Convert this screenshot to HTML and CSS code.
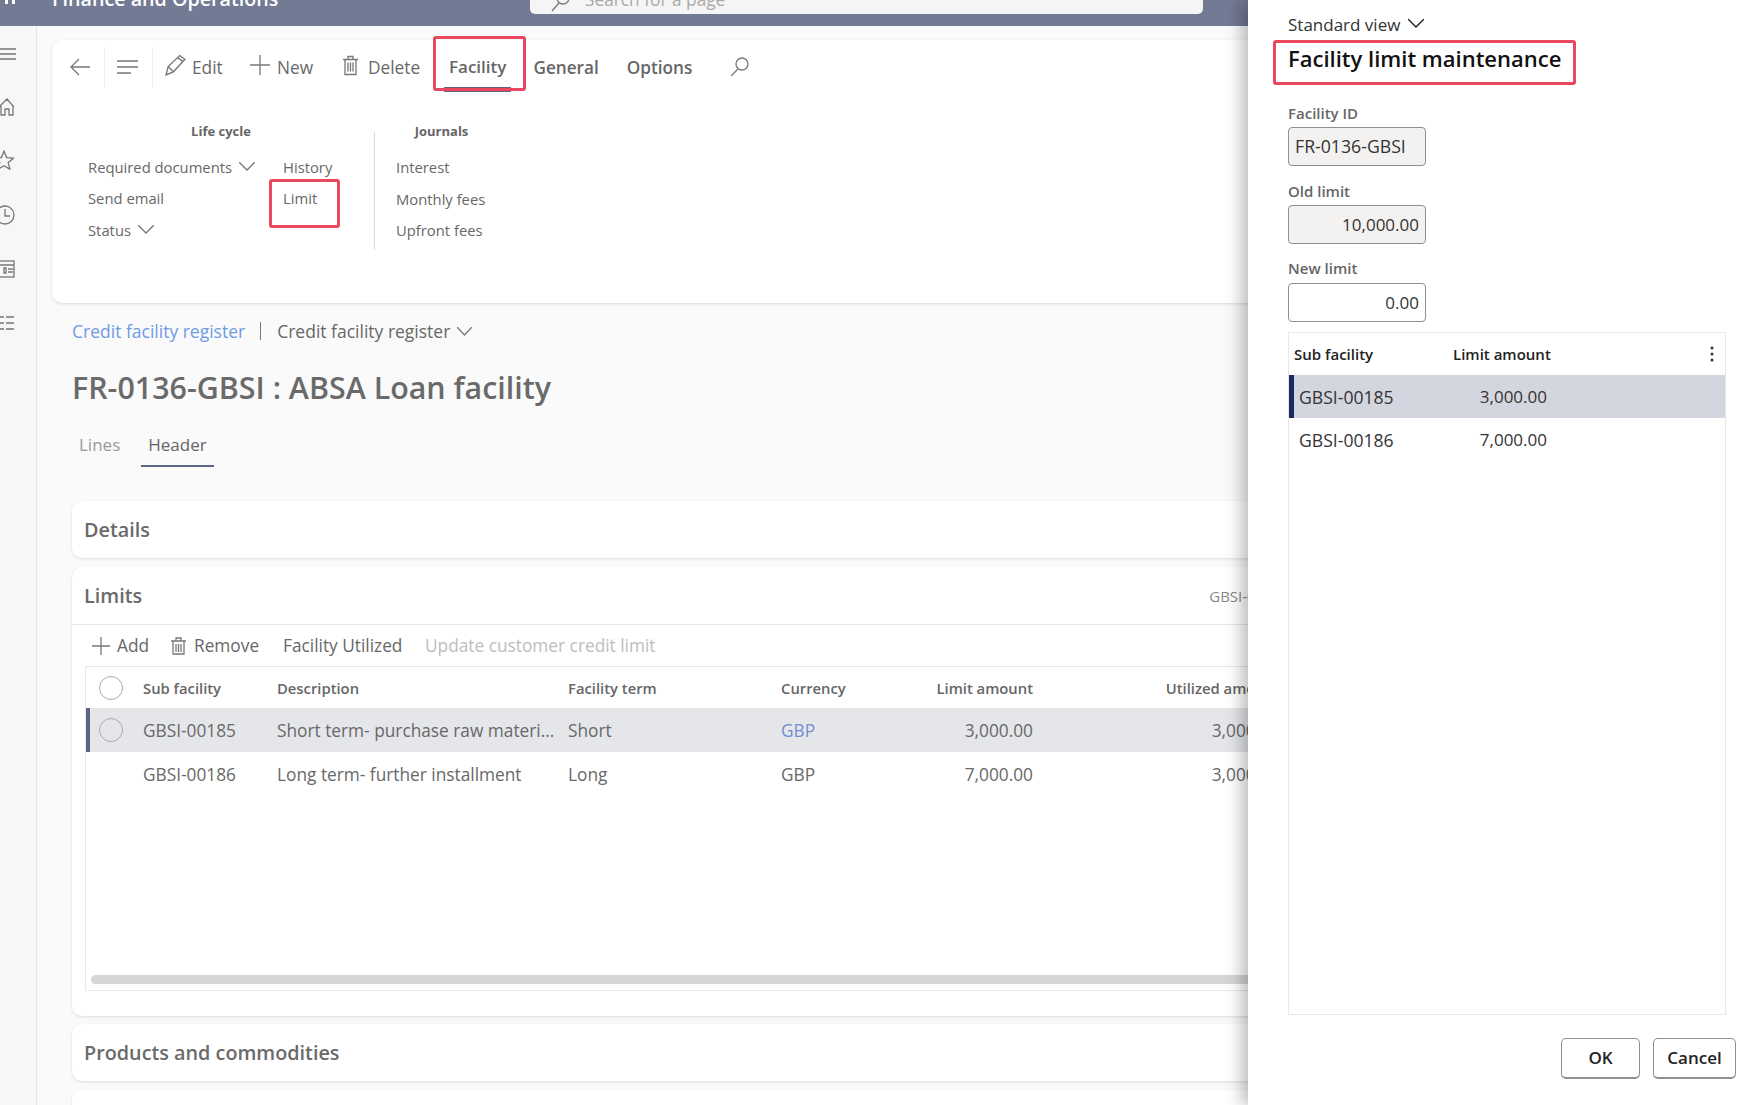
FILE: index.html
```html
<!DOCTYPE html>
<html>
    <head>
        <title>Facility limit maintenance</title>
        <link rel="stylesheet" href="styles.css">
    </head>
    <body>
        <div class="topbar">
            <svg class="waffle" width="12" height="4" viewBox="0 0 12 4"><rect x="0" y="0" width="3" height="4" fill="#fff"/><rect x="7" y="0" width="3" height="4" fill="#fff"/></svg>
            <div class="app_name">Finance and Operations</div>
            <div class="searchbox">
                <svg width="22" height="22" viewBox="0 0 22 22" class="ico"><circle cx="13" cy="8" r="6"/><path d="M9 13L2 21"/></svg>
                <span>Search for a page</span>
            </div>
        </div>

        <div class="shell">
            <div class="rail">
                <svg width="16" height="12" viewBox="0 0 16 12" class="ico"><path d="M0 1H16M0 6H16M0 11H16"/></svg>
                <svg width="14" height="18" viewBox="6 0 14 18" class="ico"><path d="M5 9L13 1L20 9M7 8V17H11V11H15V17H19V8"/></svg>
                <svg width="14" height="20" viewBox="7 0 14 20" class="ico"><path d="M11 1L13.6 7.6L20.5 8.2L15.2 12.6L16.9 19.3L11 15.7L5 19.3L6.8 12.6L1.5 8.2L8.4 7.6Z"/></svg>
                <svg width="15" height="20" viewBox="5 0 15 20" class="ico"><circle cx="10" cy="10" r="9"/><path d="M10 4V11H15"/></svg>
                <svg width="15" height="18" viewBox="5 0 15 18" class="ico"><rect x="1" y="1" width="18" height="16"/><path d="M1 5H19M9 8H11V13H9ZM13 9H18M13 12H18"/></svg>
                <svg width="14" height="15" viewBox="0 0 14 15" class="ico"><path d="M0 1H4M6 1H14M0 7H4M6 7H14M0 13H4M6 13H14"/></svg>
            </div>

            <div class="content">
                <div class="actionpane">
                    <div class="actionbar">
                        <span class="action_back"><svg width="20" height="20" viewBox="0 0 20 20" class="ico"><path d="M20 10H1M9 2L1 10L9 18"/></svg></span>
                        <span class="action_sep"></span>
                        <span class="action_lines"><svg width="21" height="14" viewBox="0 0 21 14" class="ico"><path d="M0 1H21M0 7H21M0 13H14"/></svg></span>
                        <span class="action_sep"></span>
                        <span class="action action_edit"><svg width="21" height="22" viewBox="0 0 20 21" class="ico"><path d="M1 20L3 12L14 1.5L19 5L8 17ZM3 12L8 17M12 3.5L17 7"/></svg>Edit</span>
                        <span class="action action_new"><svg width="20" height="20" viewBox="0 0 20 20" class="ico"><path d="M10 0V20M0 10H20"/></svg>New</span>
                        <span class="action action_delete"><svg width="15" height="21" viewBox="0 0 15 20" class="ico"><path d="M2 4V19H13V4M0 4H15M5 4V1H10V4M5 7V16M7.5 7V16M10 7V16"/></svg>Delete</span>
                        <span class="tab_facility marked">Facility</span>
                        <span class="action_tab action_general">General</span>
                        <span class="action_tab action_options">Options</span>
                        <svg width="19" height="19" viewBox="0 0 19 19" class="ico action_search"><circle cx="12" cy="7" r="6"/><path d="M8 12L1 19"/></svg>
                    </div>
                    <div class="groups">
                        <div class="group_life">
                            <div class="group_title">Life cycle</div>
                            <div class="group_links">
                                <div>Required documents<svg width="16" height="9" viewBox="0 0 16 9" class="ico chev"><path d="M0 0L8 8L16 0"/></svg></div>
                                <div>History</div>
                                <div>Send email</div>
                                <div class="marked marked_limit">Limit</div>
                                <div>Status<svg width="16" height="9" viewBox="0 0 16 9" class="ico chev"><path d="M0 0L8 8L16 0"/></svg></div>
                            </div>
                        </div>
                        <div class="group_sep"></div>
                        <div class="group_journals">
                            <div class="group_title">Journals</div>
                            <div>Interest</div>
                            <div>Monthly fees</div>
                            <div>Upfront fees</div>
                        </div>
                    </div>
                </div>

                <div class="page">
                    <div class="breadcrumb">
                        <span class="crumb_link">Credit facility register</span>
                        <span class="crumb_sep"></span>
                        <span>Credit facility register</span>
                        <svg width="15" height="9" viewBox="0 0 15 9" class="ico chev"><path d="M0 0L7.500 8L15 0"/></svg>
                    </div>
                    <div class="page_title">FR-0136-GBSI : ABSA Loan facility</div>
                    <div class="tabs">
                        <span class="tab">Lines</span>
                        <span class="tab tab_on">Header</span>
                    </div>

                    <div class="card card_short">Details</div>

                    <div class="card card_limits">
                        <div class="limits_head">
                            <span>Limits</span>
                            <span class="limits_ref">GBSI-00185</span>
                        </div>
                        <div class="toolbar">
                            <span class="tool tool_add"><svg width="18" height="18" viewBox="0 0 18 18" class="ico"><path d="M9 0V18M0 9H18"/></svg>Add</span>
                            <span class="tool tool_remove"><svg width="15" height="18" viewBox="0 0 15 18" class="ico"><path d="M2 4V17H13V4M0 4H15M5 4V1H10V4M5 7V15M7.500 7V15M10 7V15"/></svg>Remove</span>
                            <span class="tool tool_util">Facility Utilized</span>
                            <span class="tool tool_off">Update customer credit limit</span>
                        </div>
                        <div class="grid">
                            <div class="grid_row grid_head">
                                <span class="c_sel"><i class="radio"></i></span>
                                <span class="c_sub">Sub facility</span>
                                <span class="c_desc">Description</span>
                                <span class="c_term">Facility term</span>
                                <span class="c_cur">Currency</span>
                                <span class="c_amt">Limit amount</span>
                                <span class="c_used">Utilized amount</span>
                            </div>
                            <div class="grid_row grid_sel">
                                <span class="c_sel"><i class="radio"></i></span>
                                <span class="c_sub">GBSI-00185</span>
                                <span class="c_desc">Short term- purchase raw materi...</span>
                                <span class="c_term">Short</span>
                                <span class="c_cur cur_link">GBP</span>
                                <span class="c_amt">3,000.00</span>
                                <span class="c_used">3,000.00</span>
                            </div>
                            <div class="grid_row">
                                <span class="c_sel"></span>
                                <span class="c_sub">GBSI-00186</span>
                                <span class="c_desc">Long term- further installment</span>
                                <span class="c_term">Long</span>
                                <span class="c_cur">GBP</span>
                                <span class="c_amt">7,000.00</span>
                                <span class="c_used">3,000.00</span>
                            </div>
                            <div class="grid_fill"></div>
                            <div class="scrollbar"></div>
                        </div>
                    </div>

                    <div class="card card_short">Products and commodities</div>
                    <div class="card card_last"></div>
                </div>
            </div>
        </div>

        <div class="panel">
            <div class="view_name">Standard view<svg width="16" height="9" viewBox="0 0 16 9" class="ico_dark"><path d="M0 0L8 8L16 0"/></svg></div>
            <div class="panel_title"><span class="marked marked_title">Facility limit maintenance</span></div>

            <label class="field_label field_first">Facility ID</label>
            <div class="field field_ro field_id">FR-0136-GBSI</div>
            <label class="field_label">Old limit</label>
            <div class="field field_ro field_num">10,000.00</div>
            <label class="field_label field_last">New limit</label>
            <div class="field field_num field_new">0.00</div>

            <div class="panel_grid">
                <div class="pg_head">
                    <span class="pg_sub">Sub facility</span>
                    <span>Limit amount</span>
                    <svg class="pg_more" width="4" height="16" viewBox="0 0 4 16"><circle cx="2" cy="2" r="1.500"/><circle cx="2" cy="8" r="1.500"/><circle cx="2" cy="14" r="1.500"/></svg>
                </div>
                <div class="pg_row pg_sel"><span class="pg_id">GBSI-00185</span><span class="pg_amt">3,000.00</span></div>
                <div class="pg_row"><span class="pg_id">GBSI-00186</span><span class="pg_amt">7,000.00</span></div>
            </div>

            <div class="panel_foot">
                <button class="btn btn_ok">OK</button>
                <button class="btn btn_cancel">Cancel</button>
            </div>
        </div>
    </body>
</html>
```

FILE: styles.css
```css
html, body {
    margin: 0;
    padding: 0;
    height: 100%;
    overflow: hidden;
}

body {
    position: relative;
    width: 1737px;
    height: 1105px;
    background: #fafafa;
    font-family: "Open Sans", "Noto Sans", sans-serif;
    font-size: 17.300px;
    color: #686868;
}

.ico {
    fill: none;
    stroke: #777;
    stroke-width: 1.3;
    flex: none;
}

.ico_dark {
    fill: none;
    stroke: #222;
    stroke-width: 1.4;
    margin-left: 8px;
}

.chev {
    margin-left: 7px;
    vertical-align: 2px;
}

/* top bar, cut by the top of the picture */
.topbar {
    display: flex;
    align-items: flex-end;
    height: 26px;
    overflow: hidden;
    background: #737a94;
}

.waffle {
    margin: 0 0 22px 5px;
}

.app_name {
    margin: 0 0 16px 35px;
    width: 478px;
    line-height: 22px;
    font-size: 19.700px;
    font-weight: 600;
    color: #fff;
    white-space: nowrap;
}

.searchbox {
    align-self: flex-start;
    display: flex;
    align-items: flex-end;
    gap: 13px;
    width: 653px;
    height: 14px;
    padding-left: 20px;
    overflow: hidden;
    background: #f5f5f5;
    border-radius: 0 0 5px 5px;
    color: #aaa;
}

.searchbox svg {
    margin-bottom: 2px;
}

.searchbox span {
    line-height: 20px;
    margin-bottom: 4px;
}

.shell {
    display: flex;
    height: 1079px;
}

.rail {
    flex: none;
    display: flex;
    flex-direction: column;
    align-items: flex-start;
    width: 37px;
    padding-top: 22px;
    box-sizing: border-box;
    background: #f7f7f7;
    border-right: 1px solid #e6e6e6;
}

.rail svg:nth-child(1) { margin-bottom: 38px; }
.rail svg:nth-child(2) { margin-bottom: 34px; }
.rail svg:nth-child(3) { margin-bottom: 35px; }
.rail svg:nth-child(4) { margin-bottom: 35px; }
.rail svg:nth-child(5) { margin-bottom: 38px; }

.content {
    flex: 1;
    padding: 14px 0 0 15px;
    min-width: 0;
}

/* action pane */
.actionpane {
    height: 263px;
    background: #fff;
    border-radius: 10px 0 0 10px;
    box-shadow: 0 1px 3px rgba(0,0,0,.14);
}

.actionbar {
    display: flex;
    align-items: flex-start;
    height: 45px;
    padding: 7px 0 0 18px;
}

.actionbar > * {
    display: flex;
    align-items: center;
    height: 40px;
}

.action_back { width: 34px; }
.action_sep { width: 1px; background: #ececec; }
.action_lines { width: 47px; padding-left: 12px; box-sizing: border-box; }

.action svg {
    margin: 0 7px 4px 0;
}

.action_edit { margin-left: 12px; width: 85px; }
.action_edit svg { margin-right: 6px; }
.action_new { width: 93px; }
.action_delete { width: 101px; }
.action_delete svg { margin-right: 10px; }

.tab_facility {
    position: relative;
    padding: 0 5px 1px;
    height: 39px;
    font-size: 17px;
    font-weight: 600;
    border-bottom: 5px solid #5d6580;
    color: #666;
}

.action_tab { font-size: 17.200px; font-weight: 600; color: #666; }
.action_general { margin-left: 22px; }
.action_options { margin-left: 28px; }
.action_search { margin: 10px 0 0 38px; height: 19px !important; }

/* red annotation boxes over the screenshot */
.marked {
    position: relative;
}

.marked::after {
    content: "";
    position: absolute;
    border: 3px solid #e8475f;
    border-radius: 3px;
    box-sizing: border-box;
}

.tab_facility.marked::after { left: -11px; top: -11px; width: 93px; height: 55px; }
.marked_limit::after { left: -14px; top: -4px; width: 71px; height: 49px; }
.marked_title::after { left: -15px; top: -3px; width: 303px; height: 45px; }

.groups {
    display: flex;
    padding: 30px 0 0 36px;
    font-size: 14.800px;
}

.group_title {
    height: 18px;
    line-height: 18px;
    margin-bottom: 12px;
    font-size: 13px;
    font-weight: 700;
    text-align: center;
    color: #666;
}

.group_life {
    width: 286px;
}

.group_life .group_title {
    width: 266px;
}

.group_links {
    display: grid;
    grid-template-columns: 195px 1fr;
    grid-template-rows: 31px 32px 31px;
    line-height: 31px;
}

.group_sep {
    width: 1px;
    height: 118px;
    margin-top: 10px;
    background: #d8d8d8;
}

.group_journals {
    width: 91px;
    margin-left: 21px;
    line-height: 31.500px;
}

/* page body */
.page {
    padding-left: 20px;
}

.breadcrumb {
    display: flex;
    align-items: center;
    height: 24px;
    margin-top: 16px;
    font-size: 17.500px;
}

.crumb_link { color: #6f9be6; }

.crumb_sep {
    width: 1px;
    height: 18px;
    margin: 0 16px 0 15px;
    background: #777;
}

.page_title {
    height: 40px;
    margin-top: 25px;
    line-height: 40px;
    font-size: 30.400px;
    font-weight: 600;
    color: #6a6a6a;
}

.tabs {
    display: flex;
    gap: 14px;
    margin-top: 25px;
    font-size: 17px;
}

.tab {
    padding: 0 7px 8px;
    line-height: 24px;
    color: #999;
}

.tab_on {
    color: #666;
    border-bottom: 2px solid #5d6580;
}

.tab:first-child {
    border-bottom: 2px solid transparent;
}

.card {
    background: #fff;
    border-radius: 10px 0 0 10px;
    box-shadow: 0 1px 3px rgba(0,0,0,.12);
}

.card_short {
    height: 57px;
    padding-left: 12px;
    line-height: 57px;
    font-size: 19.800px;
    font-weight: 600;
    color: #6a6a6a;
}

.tabs + .card_short {
    margin-top: 34px;
}

.card_limits {
    height: 449px;
    margin: 9px 0 8px;
}

.limits_head {
    display: flex;
    justify-content: space-between;
    align-items: center;
    height: 57px;
    padding: 0 447px 0 12px;
    border-bottom: 1px solid #e6e6e6;
    font-size: 19.800px;
    font-weight: 600;
    color: #6a6a6a;
}

.limits_ref {
    font-size: 15px;
    font-weight: 400;
    color: #888;
}

.toolbar {
    display: flex;
    align-items: center;
    height: 41px;
    padding-left: 20px;
}

.tool {
    display: flex;
    align-items: center;
}

.tool svg { margin-right: 7px; }
.tool_add { width: 79px; }
.tool_remove { width: 112px; }
.tool_remove svg { margin-right: 8px; }
.tool_util { width: 142px; }
.tool_off { color: #bdbdbd; }

.grid {
    display: flex;
    flex-direction: column;
    height: 325px;
    margin-left: 13px;
    box-sizing: border-box;
    border: 1px solid #e8e8e8;
    border-right: 0;
}

.grid_row {
    display: flex;
    align-items: center;
    height: 44px;
    flex: none;
}

.grid_head {
    height: 41px;
    font-size: 14.800px;
    font-weight: 600;
    color: #666;
}

.grid_sel {
    background: #e5e6ea;
    box-shadow: inset 4px 0 0 #5d6580;
}

.c_sel { width: 57px; display: flex; padding-left: 13px; box-sizing: border-box; }
.c_sub { width: 134px; }
.c_desc { width: 291px; white-space: nowrap; }
.c_term { width: 213px; }
.c_cur { width: 100px; }
.c_amt { width: 152px; text-align: right; }
.c_used { width: 247px; text-align: right; white-space: nowrap; }
.cur_link { color: #6f8fd0; }

.radio {
    display: block;
    width: 24px;
    height: 24px;
    box-sizing: border-box;
    border: 1px solid #aaa;
    border-radius: 50%;
}

.grid_fill {
    flex: 1;
}

.scrollbar {
    height: 9px;
    margin: 0 0 6px 5px;
    background: #d6d6d6;
    border-radius: 5px 0 0 5px;
}

.card_last {
    height: 40px;
    margin-top: 9px;
}

/* side panel, over the page */
.panel {
    position: absolute;
    top: 0;
    right: 0;
    width: 489px;
    height: 1105px;
    padding: 13px 1px 0 40px;
    box-sizing: border-box;
    background: #fff;
    box-shadow: -6px 0 16px rgba(0,0,0,.28);
    color: #222;
}

.view_name {
    height: 24px;
    line-height: 24px;
    font-size: 17px;
    color: #333;
}

.view_name svg {
    vertical-align: 3px;
}

.panel_title {
    height: 38px;
    margin-top: 2px;
    line-height: 38px;
    font-size: 22px;
    font-weight: 600;
    color: #111;
    white-space: nowrap;
}

.field_label {
    display: block;
    height: 20px;
    margin: 15px 0 4px;
    line-height: 20px;
    font-size: 15px;
    font-weight: 600;
    color: #666;
}

.field_first { margin-top: 26px; }
.field_last { margin: 14px 0 5px; }

.field {
    width: 138px;
    height: 39px;
    padding: 0 6px;
    line-height: 37px;
    box-sizing: border-box;
    font-size: 17px;
    border: 1px solid #8f8f8f;
    border-radius: 4px;
    color: #333;
}

.field_id { font-size: 17.700px; white-space: nowrap; }
.field_ro { background: #f3f2f1; }
.field_num { text-align: right; }

.panel_grid {
    height: 683px;
    margin: 10px 0 0;
    width: 438px;
    box-sizing: border-box;
    border: 1px solid #e8e8e8;
}

.pg_head {
    display: flex;
    align-items: center;
    height: 42px;
    padding-left: 5px;
    font-size: 15px;
    font-weight: 600;
    color: #222;
}

.pg_sub { width: 159px; }

.pg_more {
    margin-left: auto;
    margin-right: 11px;
    fill: #333;
}

.pg_row {
    display: flex;
    align-items: center;
    height: 43px;
    padding-left: 10px;
    font-size: 17px;
    color: #333;
}

.pg_sel {
    background: #d3d6df;
    box-shadow: inset 5px 0 0 #1a2a5e;
}

.pg_id { width: 148px; font-size: 17.600px; }
.pg_amt { width: 100px; text-align: right; }

.panel_foot {
    display: flex;
    justify-content: flex-end;
    gap: 13px;
    margin-top: 23px;
}

.btn {
    height: 41px;
    padding: 0 0 2px;
    background: #fff;
    border: 1px solid #8f8f8f;
    border-bottom-width: 2px;
    border-radius: 5px;
    font-family: inherit;
    font-size: 17px;
    font-weight: 600;
    color: #222;
}

.btn_ok { width: 79px; }
.btn_cancel { width: 83px; }
```
